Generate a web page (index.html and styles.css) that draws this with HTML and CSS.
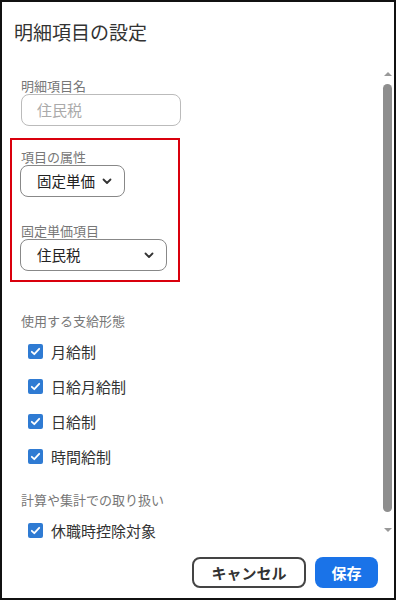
FILE: index.html
```html
<html>
    <head>
        <link rel="stylesheet" href="styles.css">
        <title>明細項目の設定</title>
    </head>
    <body>
        <div class="dialog">
            <div class="title">明細項目の設定</div>
            <div class="main">
                <div class="content">
                    <div class="field">
                        <div class="label">明細項目名</div>
                        <div class="textbox">住民税</div>
                    </div>
                    <div class="highlight">
                        <div class="label">項目の属性</div>
                        <div class="select short">固定単価
                            <svg class="chevron" width="10" height="7" viewBox="0 0 10 7"><path d="M1.5 1.5 L5 5 L8.5 1.5" fill="none" stroke="#333" stroke-width="1.8" stroke-linecap="round" stroke-linejoin="round"/></svg>
                        </div>
                        <div class="label second">固定単価項目</div>
                        <div class="select wide">住民税
                            <svg class="chevron" width="10" height="7" viewBox="0 0 10 7"><path d="M1.5 1.5 L5 5 L8.5 1.5" fill="none" stroke="#333" stroke-width="1.8" stroke-linecap="round" stroke-linejoin="round"/></svg>
                        </div>
                    </div>
                    <div class="field section">
                        <div class="label">使用する支給形態</div>
                        <div class="checks">
                            <div class="check"><span class="box"><svg width="15" height="15" viewBox="0 0 15 15"><path d="M3.8 7.8 L6.3 10.2 L11.2 4.8" fill="none" stroke="#fff" stroke-width="1.8" stroke-linecap="round" stroke-linejoin="round"/></svg></span>月給制</div>
                            <div class="check"><span class="box"><svg width="15" height="15" viewBox="0 0 15 15"><path d="M3.8 7.8 L6.3 10.2 L11.2 4.8" fill="none" stroke="#fff" stroke-width="1.8" stroke-linecap="round" stroke-linejoin="round"/></svg></span>日給月給制</div>
                            <div class="check"><span class="box"><svg width="15" height="15" viewBox="0 0 15 15"><path d="M3.8 7.8 L6.3 10.2 L11.2 4.8" fill="none" stroke="#fff" stroke-width="1.8" stroke-linecap="round" stroke-linejoin="round"/></svg></span>日給制</div>
                            <div class="check"><span class="box"><svg width="15" height="15" viewBox="0 0 15 15"><path d="M3.8 7.8 L6.3 10.2 L11.2 4.8" fill="none" stroke="#fff" stroke-width="1.8" stroke-linecap="round" stroke-linejoin="round"/></svg></span>時間給制</div>
                        </div>
                    </div>
                    <div class="field section2">
                        <div class="label">計算や集計での取り扱い</div>
                        <div class="checks">
                            <div class="check"><span class="box"><svg width="15" height="15" viewBox="0 0 15 15"><path d="M3.8 7.8 L6.3 10.2 L11.2 4.8" fill="none" stroke="#fff" stroke-width="1.8" stroke-linecap="round" stroke-linejoin="round"/></svg></span>休職時控除対象</div>
                        </div>
                    </div>
                </div>
                <div class="scrollbar">
                    <div class="arrow up"></div>
                    <div class="thumb"></div>
                    <div class="arrow down"></div>
                </div>
            </div>
            <div class="footer">
                <a class="button cancel">キャンセル</a>
                <a class="button save">保存</a>
            </div>
        </div>
    </body>
</html>
```

FILE: styles.css
```css
body {
    margin: 0;
    background-color: white;
    font-family: "Noto Sans CJK JP", "Noto Sans", sans-serif;
    color: #333;
}
.dialog {
    width: 396px;
    height: 600px;
    box-sizing: border-box;
    border: 2px solid #111;
    display: flex;
    flex-direction: column;
}
.title {
    font-size: 19px;
    line-height: 24px;
    padding: 18px 0 0 12px;
    height: 60px;
    box-sizing: border-box;
    flex-shrink: 0;
}
.main {
    height: 483px;
    flex-shrink: 0;
    display: flex;
    overflow: hidden;
}
.content {
    flex: 1;
    padding: 16px 0 0 8px;
}
.field {
    padding-left: 11px;
}
.label {
    font-size: 13px;
    line-height: 16px;
    color: #777;
}
.textbox {
    width: 160px;
    height: 32px;
    box-sizing: border-box;
    border: 1px solid #bbb;
    border-radius: 8px;
    padding-left: 15px;
    font-size: 15px;
    line-height: 30px;
    color: #aaa;
}
.highlight {
    width: 170px;
    box-sizing: border-box;
    margin-top: 12px;
    border: 2px solid #d9000d;
    padding: 9px 8px 9px 8px;
}
.highlight .label {
    padding-left: 1px;
}
.label.second {
    margin-top: 26px;
}
.select {
    height: 32px;
    box-sizing: border-box;
    border: 1px solid #888;
    border-radius: 8px;
    padding: 0 12px 0 16px;
    font-size: 14.5px;
    line-height: 30px;
    color: #222;
    display: flex;
    align-items: center;
    justify-content: space-between;
}
.select.short {
    width: 105px;
}
.select.wide {
    width: 147px;
}
.section {
    margin-top: 31px;
}
.section2 {
    margin-top: 18px;
}
.checks {
    margin-top: 5px;
    padding-left: 7px;
}
.check {
    height: 35px;
    display: flex;
    align-items: center;
    font-size: 15px;
    color: #333;
}
.box {
    width: 15px;
    height: 15px;
    background-color: #2f7bd3;
    border-radius: 2px;
    margin-right: 8px;
    display: flex;
}
.scrollbar {
    width: 9px;
    margin-right: 2px;
    display: flex;
    flex-direction: column;
    align-items: center;
}
.arrow {
    width: 0;
    height: 0;
    border-left: 4px solid transparent;
    border-right: 4px solid transparent;
}
.arrow.up {
    margin-top: 10px;
    border-bottom: 4px solid #999;
}
.arrow.down {
    margin-top: 16px;
    margin-bottom: 13px;
    border-top: 4px solid #999;
}
.thumb {
    margin-top: 8px;
    flex: 1;
    width: 9px;
    border-radius: 5px;
    background-color: #8e8e8e;
}
.footer {
    display: flex;
    justify-content: flex-end;
    gap: 9px;
    padding: 12px 16px 0 0;
}
.button {
    height: 31px;
    box-sizing: border-box;
    border-radius: 8px;
    font-size: 15px;
    font-weight: bold;
    display: flex;
    align-items: center;
    justify-content: center;
}
.cancel {
    width: 114px;
    border: 2px solid #444;
    color: #333;
}
.save {
    width: 63px;
    background-color: #1a73e8;
    color: white;
}
```
